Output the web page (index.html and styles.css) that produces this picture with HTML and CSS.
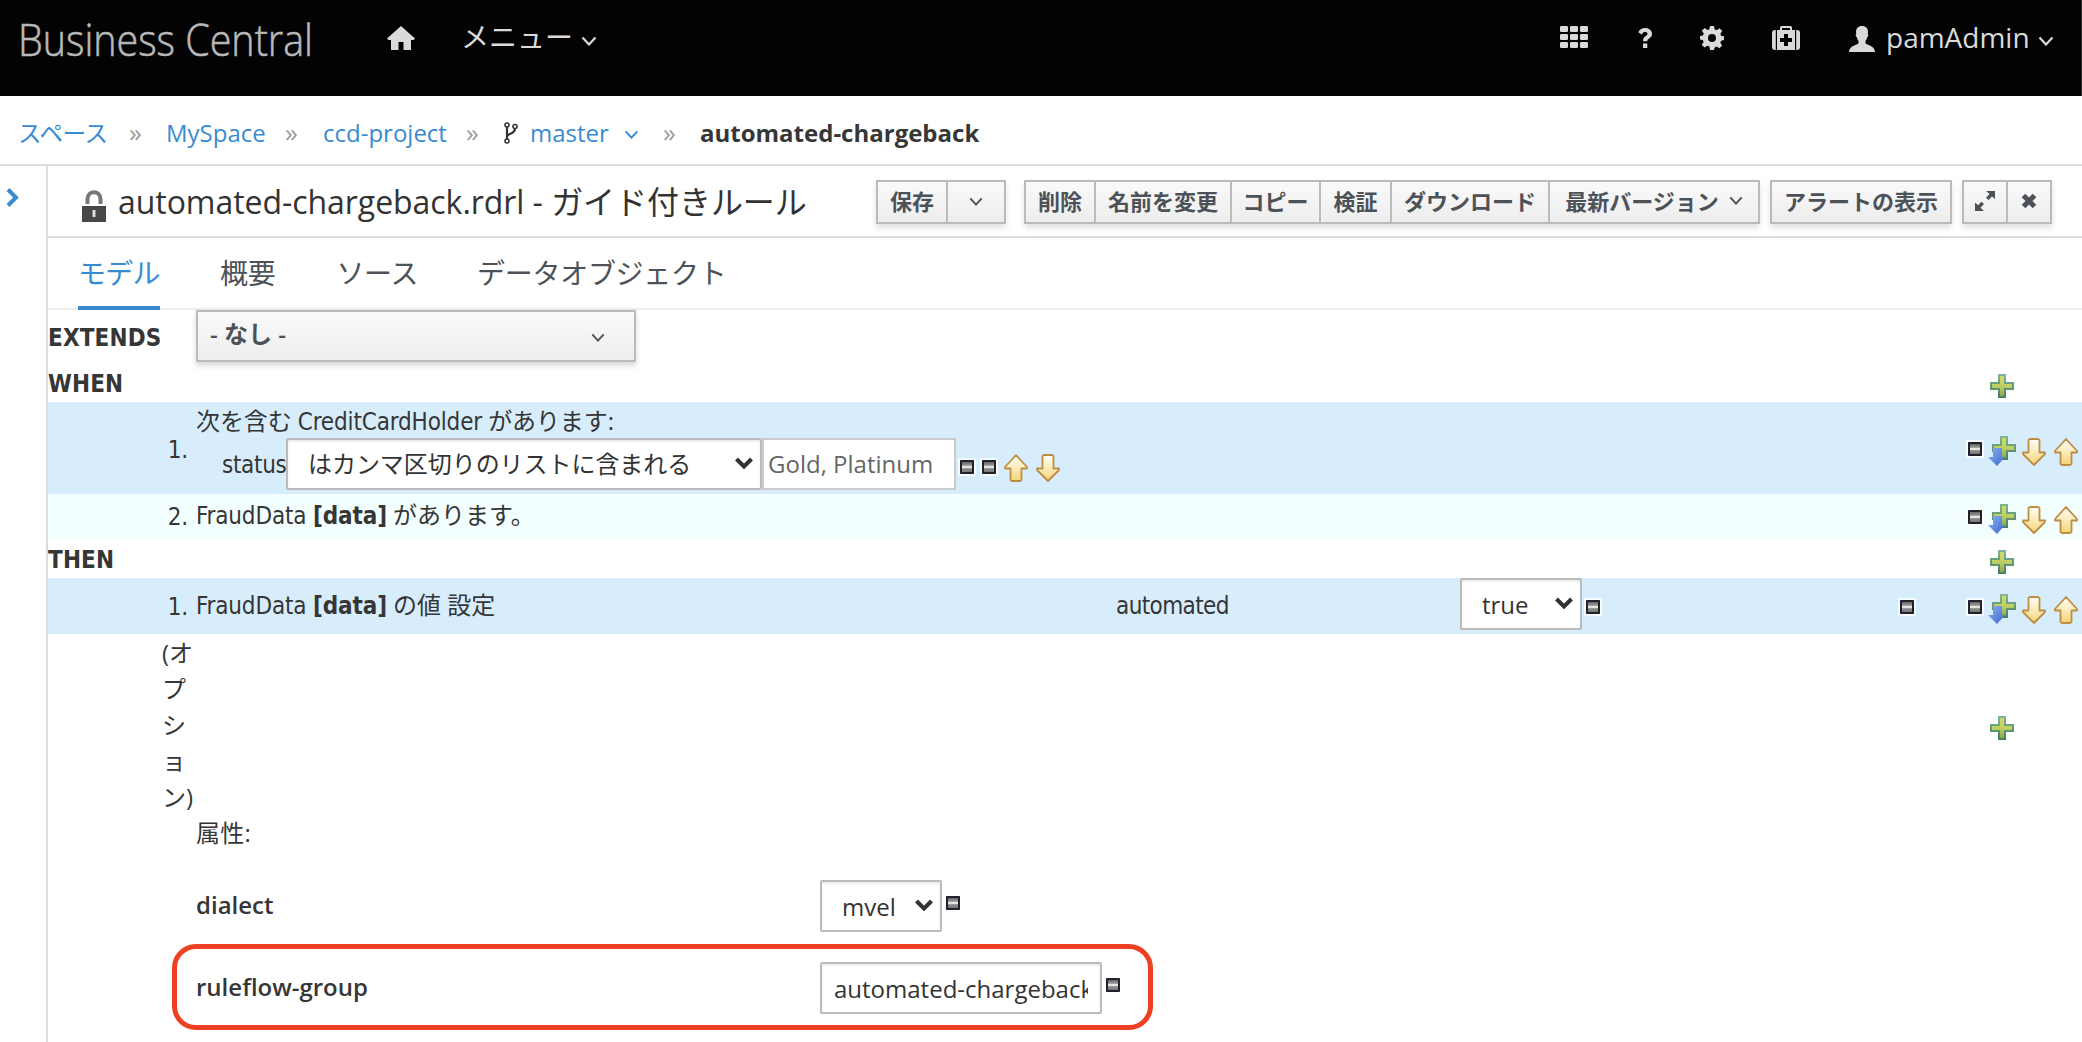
FILE: index.html
```html
<!DOCTYPE html>
<html lang="ja">
<head>
<meta charset="utf-8">
<title>Business Central</title>
<link rel="stylesheet" href="styles.css">
</head>
<body>
<svg class="defs" width="0" height="0" aria-hidden="true">
  <defs>
    <linearGradient id="gold" x1="0" y1="0" x2="0" y2="1"><stop offset="0" stop-color="#fffdf6"/><stop offset=".45" stop-color="#fcecc0"/><stop offset="1" stop-color="#f6d475"/></linearGradient>
    <linearGradient id="green" x1="0" y1="0" x2="0" y2="1"><stop offset="0" stop-color="#d3dc68"/><stop offset=".5" stop-color="#bfd063"/><stop offset="1" stop-color="#7fa650"/></linearGradient>
    <linearGradient id="leaf" x1="0" y1="0" x2="0" y2="1"><stop offset="0" stop-color="#7fb692"/><stop offset="1" stop-color="#4b7d5d"/></linearGradient>
    <linearGradient id="blue" x1="0" y1="0" x2="1" y2="1"><stop offset="0" stop-color="#8db2fa"/><stop offset="1" stop-color="#3a66c8"/></linearGradient>
    <linearGradient id="steel" x1="0" y1="0" x2="0" y2="1"><stop offset="0" stop-color="#666"/><stop offset=".34" stop-color="#999"/><stop offset=".4" stop-color="#e4e4e4"/><stop offset=".6" stop-color="#e4e4e4"/><stop offset=".66" stop-color="#8c8c8c"/><stop offset="1" stop-color="#777"/></linearGradient>
    <symbol id="minus" viewBox="0 0 18 18"><path d="M0 0h18v18H0z" fill="#fff" opacity=".75"/><path d="M2 2h14v14H2z" fill="#3a3aa8"/><path d="M3 2h12v1h1v12h-1v1H3v-1H2V3h1z" fill="#222226"/><path d="M4 4h10v10H4z" fill="url(#steel)"/></symbol>
    <symbol id="up" viewBox="0 0 24 28"><path d="M12 1 23 13v1.500h-5.500V26l-1.500 1H8l-1.500-1V14.500H1V13z" fill="url(#gold)" stroke="#bd8d43" stroke-width="1.800" stroke-linejoin="round"/></symbol>
    <symbol id="down" viewBox="0 0 24 28"><path d="M12 27 1 16v-1.500h5.500V2L8 1h8l1.500 1v12.500H23V16z" fill="url(#gold)" stroke="#bd8d43" stroke-width="1.800" stroke-linejoin="round"/></symbol>
    <symbol id="plus" viewBox="0 0 24 24"><path d="M9 1h6v8h8v6h-8v8H9v-8H1V9h8z" fill="url(#green)" stroke="url(#leaf)" stroke-width="2"/></symbol>
    <symbol id="insert" viewBox="0 0 28 30"><path d="M13 1h6v8h8v6h-8v8h-6v-8H5V9h8z" fill="url(#green)" stroke="url(#leaf)" stroke-width="2"/><path d="M5 12h9v9h3L9 30 0 21h5z" fill="url(#blue)"/></symbol>
    <symbol id="chev" viewBox="0 0 16 10"><path d="m1.500 1.500 6.500 7 6.500-7" fill="none" stroke="currentColor" stroke-width="2.200"/></symbol>
    <symbol id="caret" viewBox="0 0 18 12"><path d="m1.500 2 7.500 7.500L16.500 2" fill="none" stroke="#333" stroke-width="4"/></symbol>
  </defs>
</svg>

<header class="masthead">
  <svg class="brand" width="300" height="50"><text x="0" y="38" textLength="295" lengthAdjust="spacingAndGlyphs">Business Central</text></svg>
  <svg class="home" viewBox="0 0 28 24" width="28" height="24"><path d="M14 0 28 12.500 26.500 14H24v10h-7.500v-8h-5v8H4V14H1.500L0 12.500z"/></svg>
  <div class="menu"><span class="menu-text">メニュー</span><svg width="16" height="10"><use href="#chev"/></svg></div>
  <div class="tools">
    <svg class="apps" viewBox="0 0 28 22" width="28" height="22"><g><rect width="8" height="6" rx="1.200"/><rect x="10" width="8" height="6" rx="1.200"/><rect x="20" width="8" height="6" rx="1.200"/><rect y="8" width="8" height="6" rx="1.200"/><rect x="10" y="8" width="8" height="6" rx="1.200"/><rect x="20" y="8" width="8" height="6" rx="1.200"/><rect y="16" width="8" height="6" rx="1.200"/><rect x="10" y="16" width="8" height="6" rx="1.200"/><rect x="20" y="16" width="8" height="6" rx="1.200"/></g></svg>
    <svg class="help" viewBox="0 0 14 20" width="14" height="20"><path d="M.3 4.200C1.800 1.400 4 0 7.200 0 11 0 14 2.500 14 5.800c0 2.600-1.400 3.900-3 4.900-1.300.8-1.700 1.200-1.700 2.500H5c0-2.900.8-4 2.900-5.300C9.100 7.200 9.500 6.700 9.500 5.800c0-1-.9-1.700-2.300-1.700-1.500 0-2.300.6-3.500 2.300zM5 15.500h4.300V20H5z"/></svg>
    <svg class="gear" viewBox="0 0 24 24" width="24" height="24"><path fill-rule="evenodd" d="M10 0h4l.6 3.300 2.200.9L19.500 2.300l2.800 2.800-1.900 2.700.8 2.100 2.800.4v3.800l-2.900.6-.8 2.100 1.900 2.700-2.800 2.800-2.700-1.800-2.100.9L14 24h-4l-.6-3.400-2.100-.9-2.800 1.900-2.800-2.800 2-2.800-.9-2-2.800-.5V10l2.900-.5.9-2.100L1.800 4.800l2.800-2.700 2.800 1.900 2-.8zM12 8a4 4 0 1 0 0 8 4 4 0 0 0 0-8z"/></svg>
    <svg class="kit" viewBox="0 0 28 24" width="28" height="24"><path fill-rule="evenodd" d="M8 4V1.500Q8 0 9.500 0h9Q20 0 20 1.500V4h3v20H5V4zm2 0h8V2h-8zM12 8v4H8v4h4v4h4v-4h4v-4h-4V8zM3.800 4v20H3q-3 0-3-3V7q0-3 3-3zM24.200 4v20h.8q3 0 3-3V7q0-3-3-3z"/></svg>
    <svg class="person" viewBox="0 0 26 26" width="26" height="26"><path d="M13 0c4 0 6 2.500 6 6 0 .8-.1 1.500-.3 2 .9.200.9 2-.4 3-.4 2-1.300 3-1.800 4v2.500c1.500 1.500 9.500 2.500 9.500 8.500H0c0-6 8-7 9.500-8.500V15c-.5-1-1.400-2-1.800-4-1.300-1-1.300-2.800-.4-3C7.100 7.500 7 6.800 7 6c0-3.500 2-6 6-6z"/></svg>
    <span class="user">pamAdmin</span><svg class="user-chev" width="16" height="10"><use href="#chev"/></svg>
  </div>
</header>

<nav class="crumbs">
  <a class="c1 jp">スペース</a><span class="sep s1">»</span>
  <a class="c2">MySpace</a><span class="sep s2">»</span>
  <a class="c3">ccd-project</a><span class="sep s3">»</span>
  <svg class="fork" viewBox="0 0 14 22" width="14" height="22"><g fill="none" stroke="#333" stroke-width="1.600"><circle cx="3" cy="3" r="2"/><circle cx="11" cy="4.500" r="2"/><circle cx="3" cy="19" r="2"/><path stroke-width="2.200" d="M3 5v12M3 14.500c0-3 8-2 8-8"/></g></svg>
  <a class="c4">master</a><svg class="branch" width="15" height="9"><use href="#chev"/></svg><span class="sep s4">»</span>
  <strong class="current">automated-chargeback</strong>
</nav>

<div class="workspace">
  <aside class="rail"><svg viewBox="0 0 13 19" width="13" height="19"><path d="M2 1.500 10 9.500 2 17.500" fill="none" stroke="#398bcf" stroke-width="4"/></svg></aside>
  <main class="editor">
    <div class="titlebar">
      <svg class="lock" viewBox="0 0 24 32" width="24" height="32"><path d="M5.500 14V9c0-9 13-9 13 0v5" fill="none" stroke="#777" stroke-width="4"/><path d="M0 16h24v16H0z" fill="#484848"/><path d="M10.500 20h3v7h-3z" fill="#ddd"/></svg>
      <h1><span class="file">automated-chargeback.rdrl - </span><span class="kind">ガイド付きルール</span></h1>
      <div class="buttons">
        <div class="group save"><button class="b72">保存</button><button class="b62"><svg width="14" height="9"><use href="#chev"/></svg></button></div>
        <div class="group ops"><button class="b72">削除</button><button class="b138">名前を変更</button><button class="b91">コピー</button><button class="b73">検証</button><button class="b159">ダウンロード</button><button class="b212">最新バージョン<svg class="after" width="14" height="9"><use href="#chev"/></svg></button></div>
        <div class="group alerts"><button class="b182">アラートの表示</button></div>
        <div class="group window"><button class="b46"><svg viewBox="0 0 20 20" width="20" height="20"><path d="M11 0h9v8l-3-2.500-3.500 3.500-2.500-2.300L14.500 3zM0 20v-8.500l3 2.700 3.500-3.500L9 13l-3.500 3.700L9 20z" fill="#4d5258"/></svg></button><button class="b46"><svg viewBox="0 0 16 16" width="16" height="16"><path d="m2.500 2.500 11 11m0-11-11 11" fill="none" stroke="#4d5258" stroke-width="5"/></svg></button></div>
      </div>
    </div>
    <div class="tabs"><a class="t1 active">モデル</a><a class="t2">概要</a><a class="t3">ソース</a><a class="t4">データオブジェクト</a></div>

    <section class="rule">
      <div class="line extends"><b class="kw">EXTENDS</b><div class="picker"><span>- なし -</span><svg width="14" height="9"><use href="#chev"/></svg></div></div>
      <div class="line when"><b class="kw">WHEN</b><svg class="add" width="24" height="24"><use href="#plus"/></svg></div>

      <div class="line cond1">
        <span class="num">1.</span>
        <div class="pattern">
          <div class="fact">次を含む <span class="tah f1">CreditCardHolder</span> があります:</div>
          <div class="constraint"><span class="tah field">status</span><div class="select wide"><span class="op">はカンマ区切りのリストに含まれる</span><svg width="18" height="12"><use href="#caret"/></svg></div><div class="input values">Gold, Platinum</div>
            <svg class="m" width="18" height="18"><use href="#minus"/></svg><svg class="m" width="18" height="18"><use href="#minus"/></svg><svg class="a1" width="24" height="28"><use href="#up"/></svg><svg class="a2" width="24" height="28"><use href="#down"/></svg></div>
        </div>
        <div class="acts"><svg width="18" height="18"><use href="#minus"/></svg><svg class="ins" width="28" height="30"><use href="#insert"/></svg><svg class="dn" width="24" height="28"><use href="#down"/></svg><svg class="upw" width="24" height="28"><use href="#up"/></svg></div>
      </div>

      <div class="line cond2">
        <span class="num">2.</span>
        <div class="fact"><span class="tah f2">FraudData <b>[data]</b></span> があります。</div>
        <div class="acts"><svg width="18" height="18"><use href="#minus"/></svg><svg class="ins" width="28" height="30"><use href="#insert"/></svg><svg class="dn" width="24" height="28"><use href="#down"/></svg><svg class="upw" width="24" height="28"><use href="#up"/></svg></div>
      </div>

      <div class="line then"><b class="kw">THEN</b><svg class="add" width="24" height="24"><use href="#plus"/></svg></div>

      <div class="line action">
        <span class="num">1.</span>
        <div class="fact"><span class="tah f2">FraudData <b>[data]</b></span> の値 設定</div>
        <span class="tah auto">automated</span>
        <div class="cell"><div class="select bool"><span>true</span><svg width="18" height="12"><use href="#caret"/></svg></div><svg width="18" height="18"><use href="#minus"/></svg></div>
        <svg class="remove" width="18" height="18"><use href="#minus"/></svg>
        <div class="acts"><svg width="18" height="18"><use href="#minus"/></svg><svg class="ins" width="28" height="30"><use href="#insert"/></svg><svg class="dn" width="24" height="28"><use href="#down"/></svg><svg class="upw" width="24" height="28"><use href="#up"/></svg></div>
      </div>

      <div class="line options"><span class="opt">(オ<br>プ<br>シ<br>ョ<br>ン)</span><svg class="add" width="24" height="24"><use href="#plus"/></svg></div>

      <div class="attributes">
        <div class="attr-title">属性:</div>
        <div class="attr dialect"><b class="d1">dialect</b><div class="select mvel"><span>mvel</span><svg width="18" height="12"><use href="#caret"/></svg></div><svg class="m" width="18" height="18"><use href="#minus"/></svg></div>
        <div class="attr flow"><b class="d2">ruleflow-group</b><div class="input group-name"><span>automated-chargeback</span></div><svg class="m" width="18" height="18"><use href="#minus"/></svg><div class="highlight"></div></div>
      </div>
    </section>
  </main>
</div>
</body>
</html>
```
FILE: styles.css
```css
* { box-sizing: border-box; }
body { margin: 0; width: 2082px; height: 1042px; overflow: hidden; background: #fff; color: #363636; font: 24px/36px "Open Sans", "Noto Sans CJK JP", sans-serif; white-space: nowrap; }
svg { display: block; flex: none; }
.defs { position: absolute; }

.masthead { height: 96px; background: #030303; color: #dbdada; display: flex; align-items: flex-start; padding-left: 20px; border-right: 1px solid #333; }
.masthead svg { fill: #dbdada; }
.masthead .brand { margin-top: 18px; width: 300px; fill: #b9b9b9; stroke: #b9b9b9; stroke-width: .6px; overflow: visible; font-size: 44px; font-weight: 300; }
.brand text { transform: translateX(-2px); }
.home { margin: 26px 0 0 67px; }
.menu { display: flex; height: 74px; align-items: center; margin-left: 46px; font-size: 28px; }
.menu-text { width: 120px; }
.menu svg { margin-top: 8px; }
.masthead use { stroke-width: 3px; }
.tools { display: flex; margin-left: auto; padding-right: 27px; }
.apps { margin-top: 26px; }
.help { margin: 28px 0 0 50px; }
.gear { margin: 26px 0 0 48px; }
.kit { margin: 26px 0 0 48px; }
.person { margin: 26px 0 0 49px; }
.user { width: 143px; margin: 19px 0 0 11px; font-size: 28px; }
.user-chev { margin: 36px 0 0 9px; }

.crumbs { height: 70px; display: flex; align-items: flex-start; padding: 19px 0 0 18px; border-bottom: 2px solid #dcdcdc; color: #398bcf; }
.crumbs a, .crumbs strong, .sep { flex: none; }
.jp { font-size: 23.5px; letter-spacing: -.4px; }
.sep { color: #9c9c9c; width: 14px; font-size: 26px; line-height: 34px; }
.c1 { width: 111px; }
.s1 { margin-right: 23px; }
.c2 { width: 119px; }
.s2 { margin-right: 24px; }
.c3 { width: 143px; }
.s3 { margin-right: 23px; }
.fork { margin: 7px 12px 0 1px; }
.c4 { width: 93px; }
.branch { margin: 15px 24px 0 1px; }
.s4 { margin-right: 23px; }
.current { color: #363636; font-weight: 700; }

.workspace { display: flex; height: 876px; }
.rail { width: 46px; padding: 22px 0 0 6px; }
.editor { flex: 1; border-left: 2px solid #dcdcdc; }
.titlebar { height: 72px; border-bottom: 2px solid #dcdcdc; display: flex; align-items: flex-start; padding-left: 34px; }
.lock { margin-top: 24px; }
h1 { margin: 0 0 0 12px; width: 758px; font-weight: 400; font-size: 32px; line-height: 72px; height: 70px; letter-spacing: -.05px; color: #333; }
.buttons { display: flex; margin-top: 14px; }
.group { display: flex; height: 44px; box-shadow: 0 4px 6px rgba(3, 3, 3, .12); }
.save { margin-right: 18px; }
.ops { margin-right: 10px; }
.alerts { margin-right: 10px; }
button { height: 44px; margin: 0 0 0 -2px; padding: 0 0 2px; display: flex; align-items: center; justify-content: center; border: 2px solid #bbb; background: linear-gradient(#fafafa, #ededed); font: 700 22px/36px "Open Sans", "Noto Sans CJK JP", sans-serif; color: #4d5258; white-space: nowrap; }
button:first-child { margin-left: 0; }
.b72 { width: 72px; }
.b62 { width: 60px; }
.b138 { width: 138px; }
.b91 { width: 91px; }
.b73 { width: 73px; }
.b159 { width: 160px; }
.b212 { width: 212px; }
.b182 { width: 182px; }
.b46 { width: 46px; }
.after { margin: 2px 0 4px 10px; }

.tabs { height: 72px; display: flex; padding-left: 30px; border-bottom: 2px solid #ededed; font-size: 28px; line-height: 70px; color: #4d5258; }
.tabs a { height: 72px; letter-spacing: -.3px; }
.tabs .active { color: #398bcf; border-bottom: 4px solid #398bcf; width: 82px; letter-spacing: -.7px; }
.t2 { margin-left: 60px; }
.t3 { margin-left: 61px; }
.t4 { margin-left: 59px; }

.line { display: flex; }
.kw { font-family: "DejaVu Sans Condensed", "Open Sans", sans-serif; font-weight: 700; width: 148px; letter-spacing: .15px; }
.tah, .num { font-family: "DejaVu Sans Condensed", "Open Sans", sans-serif; letter-spacing: -.15px; }
.extends { height: 52px; line-height: 56px; }
.picker { width: 440px; height: 52px; border: 2px solid #bbb; background: linear-gradient(#fafafa, #ededed); box-shadow: 0 4px 6px rgba(3, 3, 3, .15); display: flex; align-items: center; justify-content: space-between; padding: 0 29px 0 12px; font-size: 24px; font-weight: 600; color: #4d5258; }
.picker span { line-height: 44px; padding-bottom: 4px; }
.picker svg { margin-top: 3px; }
.when { height: 40px; padding-top: 4px; }
.add { margin-left: auto; margin-right: 68px; }
.when .add { margin-top: 8px; }
.num { width: 148px; padding-right: 8px; text-align: right; }
.acts { display: flex; margin-left: auto; padding-right: 4px; }
.acts svg:first-child { margin-top: 4px; }
.ins { margin-left: 4px; }
.dn { margin: 2px 0 0 6px; }
.upw { margin: 2px 0 0 8px; }
.cond1 { height: 92px; background: #d7edfc; }
.cond1 .num { margin-top: 30px; }
.cond1 .fact { line-height: 38px; height: 36px; letter-spacing: -.1px; }
.cond1 .acts { margin-top: 34px; }
.constraint { display: flex; }
.field { width: 64px; margin: 9px 0 0 26px; letter-spacing: -.3px; }
.select, .input { height: 52px; border: 2px solid #bbb; border-radius: 2px; background: #fff; display: flex; align-items: center; flex: none; color: #333; }
.select { box-shadow: inset 0 2px 2px rgba(3, 3, 3, .08); padding: 0 7px 0 20px; justify-content: space-between; }
.select svg { margin-top: -2px; }
.wide { width: 476px; }
.op { font-size: 24px; letter-spacing: -.05px; }
.values { width: 194px; border-color: #ccc; border-radius: 0; padding-left: 4px; color: #666; }
.m { margin: 20px 0 0 2px; }
.m + .m { margin-left: 4px; }
.a1 { margin: 16px 0 0 6px; }
.a2 { margin: 16px 0 0 8px; }
.cond2 { height: 44px; background: #f3fffe; line-height: 42px; }
.cond2 .num { line-height: 46px; }
.cond2 .acts { margin-top: 10px; }
.then { height: 40px; padding-top: 4px; }
.then .add { margin-top: 8px; }
.action { height: 56px; background: #d7edfc; line-height: 54px; }
.action .num { line-height: 58px; }
.action .fact { width: 920px; }
.auto { width: 344px; line-height: 56px; letter-spacing: -.6px; }
.cell { display: flex; }
.cell > svg { margin: 20px 0 0 2px; }
.bool { width: 122px; }
.bool span, .mvel span, .group-name span { padding-top: 1px; }
.remove { margin: 20px 0 0 296px; }
.action .acts { margin-top: 16px; }
.options { height: 182px; }
.opt { margin: 1px 0 0 114px; }
.options .add { margin-top: 82px; }
.attributes { padding-left: 148px; }
.attr-title { height: 64px; line-height: 34px; letter-spacing: .3px; }
.attr { display: flex; height: 82px; position: relative; }
.attr b { width: 624px; line-height: 50px; font-weight: 600; }
.attr .m { margin: 14px 0 0 2px; }
.mvel { width: 122px; }
.group-name { width: 282px; padding: 0 12px; box-shadow: inset 0 2px 2px rgba(3, 3, 3, .08); }
.group-name span { overflow: hidden; }
.highlight { position: absolute; left: -24px; top: -18px; width: 981px; height: 86px; border: 5px solid #ee4023; border-radius: 24px; }
```
